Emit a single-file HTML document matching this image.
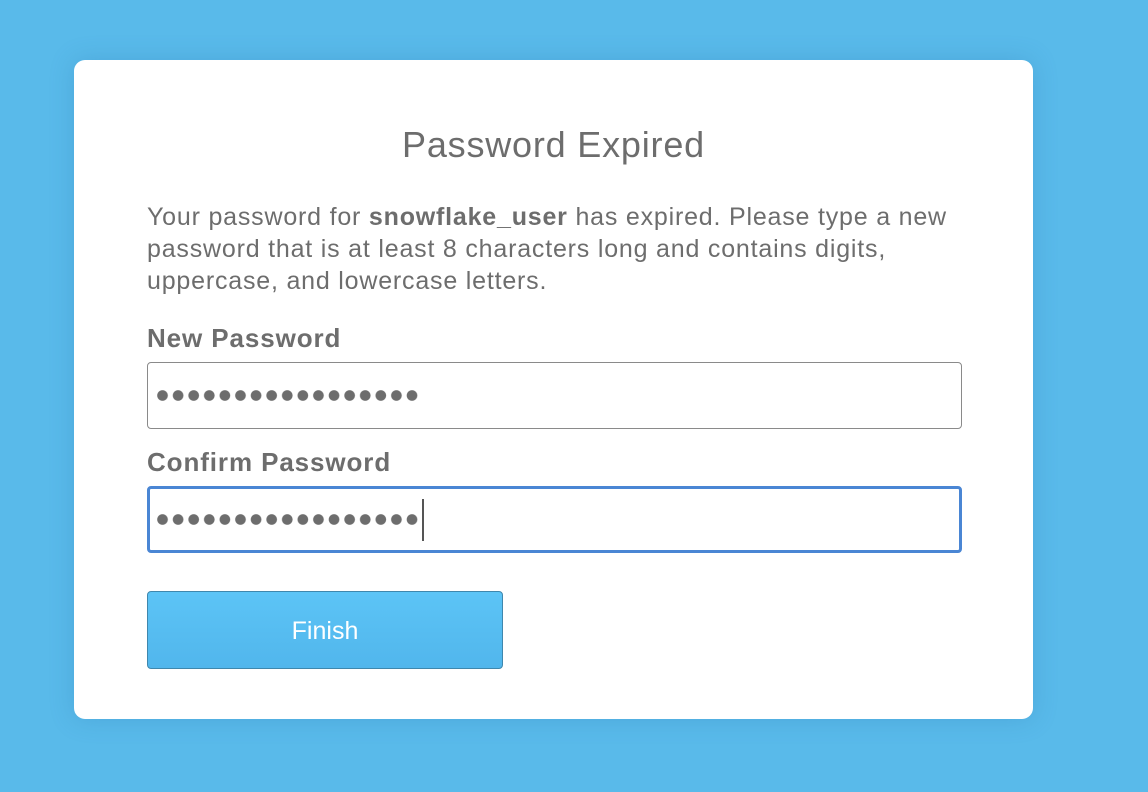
<!DOCTYPE html>
<html><head><style>
html,body{margin:0;padding:0;}
body{width:1148px;height:792px;background:#59baea;font-family:"Liberation Sans",sans-serif;color:#6d6d6d;position:relative;overflow:hidden;}
.card{position:absolute;left:74px;top:60px;width:959px;height:659px;background:#fff;border-radius:11px;box-shadow:0 0 24px rgba(40,110,170,0.25);}
.t{position:absolute;white-space:nowrap;}
.title{left:0;width:959px;text-align:center;top:63px;font-size:36px;letter-spacing:0.8px;line-height:44px;}
.p{left:73px;font-size:25px;letter-spacing:0.8px;line-height:32px;}
.lbl{left:73px;font-size:26px;letter-spacing:0.9px;font-weight:bold;}
.inp{position:absolute;left:73px;width:815px;height:64px;border:1px solid #8a8a8a;border-radius:4px;box-sizing:border-box;}
.dots{position:absolute;left:9px;top:27px;width:262px;height:11px;background:radial-gradient(circle at 5.5px 5.5px,#6d6d6d 5px,transparent 5.6px);background-size:15.6px 11px;}
.btn{position:absolute;left:73px;top:531px;width:356px;height:78px;box-sizing:border-box;border:1px solid #3f87ad;border-radius:4px;background:linear-gradient(#5cc4f6,#51b6ec);color:#fff;font-size:25px;text-align:center;line-height:78px;}
</style></head><body>
<div class="card">
<div class="t title">Password Expired</div>
<div class="t p" style="top:141px">Your password for <b>snowflake_user</b> has expired. Please type a new</div>
<div class="t p" style="top:173px">password that is at least 8 characters long and contains digits,</div>
<div class="t p" style="top:205px">uppercase, and lowercase letters.</div>
<div class="t lbl" style="top:263px">New Password</div>
<div class="inp" style="top:302px;height:67px"><div class="dots"></div></div>
<div class="t lbl" style="top:387px">Confirm Password</div>
<div class="inp" style="top:426px;height:67px;border:3px solid #4a86d4;"><div class="dots" style="left:7px;top:25px"></div><div style="position:absolute;left:272px;top:10px;width:2px;height:42px;background:#555"></div></div>
<div class="btn">Finish</div>
</div>
</body></html>
